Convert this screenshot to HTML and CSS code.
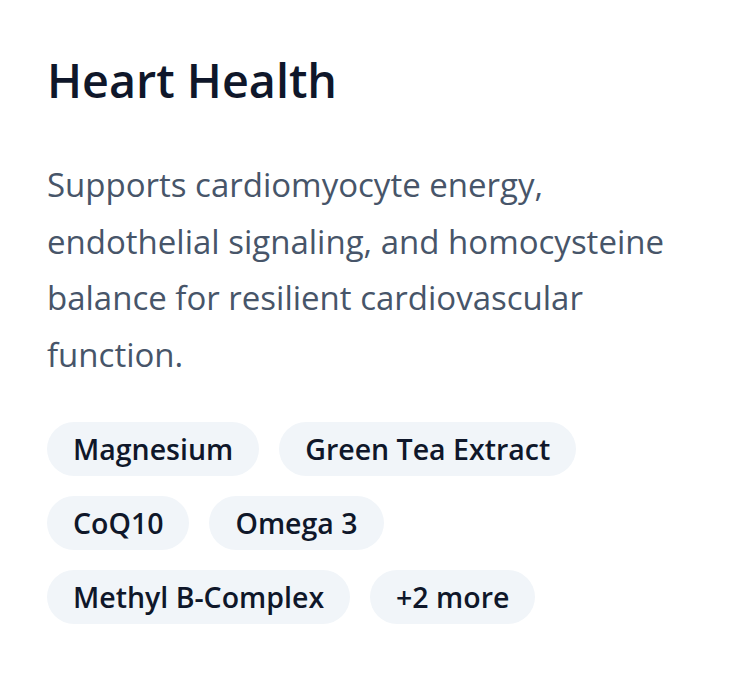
FILE: index.html
```html
<!DOCTYPE html>
<html lang="en">
<head>
<meta charset="utf-8">
<title>Heart Health</title>
<link rel="stylesheet" href="styles.css">
</head>
<body>
<article class="card">
  <h1 class="card-title">Heart Health</h1>
  <p class="card-desc">Supports cardiomyocyte energy, endothelial signaling, and homocysteine balance for resilient cardiovascular function.</p>
  <ul class="tags">
    <li class="tag">Magnesium</li>
    <li class="tag">Green Tea Extract</li>
    <li class="tag">CoQ10</li>
    <li class="tag">Omega 3</li>
    <li class="tag">Methyl B-Complex</li>
    <li class="tag">+2 more</li>
  </ul>
</article>
</body>
</html>
```
FILE: styles.css
```css
html, body {
  margin: 0;
  background: #ffffff;
}
body {
  font-family: "Open Sans", "Noto Sans", sans-serif;
}
.card {
  width: 656px;
  padding: 48px 0 0 47px;
}
.card-title {
  margin: 0;
  font-size: 46.7px;
  line-height: 64px;
  font-weight: 600;
  color: #0f172a;
}
.card-desc {
  margin: 45px 0 0;
  font-size: 33px;
  line-height: 56.5px;
  color: #475569;
}
.tags {
  list-style: none;
  margin: 39px 0 0;
  padding: 0;
  display: flex;
  flex-wrap: wrap;
  gap: 20px;
  width: 560px;
}
.tag {
  height: 54px;
  display: flex;
  align-items: center;
  padding: 0 26px;
  border-radius: 27px;
  background: #f1f5f9;
  color: #0f172a;
  font-size: 28.5px;
  font-weight: 600;
}
```
